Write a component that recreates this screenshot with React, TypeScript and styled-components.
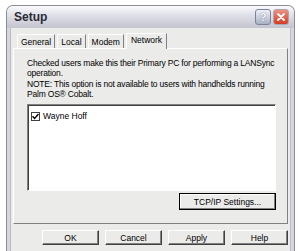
import styled, { createGlobalStyle } from "styled-components";

const GlobalStyle = createGlobalStyle`
  html, body {
    margin: 0;
    padding: 0;
    background: #ffffff;
  }
  body {
    font-family: "Liberation Sans", Arial, sans-serif;
    overflow: hidden;
  }
`;

const tabs = ["General", "Local", "Modem", "Network"];
const buttons = ["OK", "Cancel", "Apply", "Help"];

function App() {
  return (
    <>
      <GlobalStyle />
      <Window>
        <TitleBar>
          <Title>Setup</Title>
          <Controls>
            <HelpBox>?</HelpBox>
            <CloseBox>
              <svg width="10" height="10" viewBox="0 0 10 10">
                <path
                  d="M2 2 L8 8 M8 2 L2 8"
                  stroke="#ffffff"
                  strokeWidth="1.8"
                  strokeLinecap="round"
                />
              </svg>
            </CloseBox>
          </Controls>
        </TitleBar>
        <Client>
          <TabRow>
            {tabs.map((t) => (
              <Tab key={t} $active={t === "Network"}>
                {t}
              </Tab>
            ))}
          </TabRow>
          <Panel>
            <Description>
              Checked users make this their Primary PC for performing a LANSync
              operation.
              <br />
              NOTE: This option is not available to users with handhelds running
              Palm OS® Cobalt.
            </Description>
            <ListBox>
              <ListItem>
                <CheckBox>
                  <svg width="7" height="7" viewBox="0 0 7 7">
                    <path
                      d="M0.5 3.2 L2.6 5.4 L6.5 1"
                      stroke="#000"
                      strokeWidth="1.5"
                      fill="none"
                    />
                  </svg>
                </CheckBox>
                Wayne Hoff
              </ListItem>
            </ListBox>
            <PanelFooter>
              <TcpButton>TCP/IP Settings...</TcpButton>
            </PanelFooter>
          </Panel>
          <ButtonRow>
            {buttons.map((b) => (
              <DialogButton key={b}>{b}</DialogButton>
            ))}
          </ButtonRow>
        </Client>
      </Window>
    </>
  );
}

const Window = styled.div`
  width: 287px;
  height: 246px;
  margin: 5px 0 0 6px;
  border: 1px solid #8c8c9a;
  border-bottom: none;
  border-radius: 7px 7px 0 0;
  background: #d6d6de;
  display: flex;
  flex-direction: column;
  overflow: hidden;
`;

const TitleBar = styled.div`
  height: 22px;
  flex-shrink: 0;
  display: flex;
  align-items: center;
  justify-content: space-between;
  padding: 0 5px 0 7px;
  background: linear-gradient(
    to bottom,
    #fcfcfd 0%,
    #e6e6ee 30%,
    #d2d2dc 70%,
    #c4c4d0 100%
  );
`;

const Title = styled.div`
  font-size: 12px;
  font-weight: bold;
  color: #2a2a34;
`;

const Controls = styled.div`
  display: flex;
  gap: 2px;
`;

const CaptionButton = styled.div`
  width: 16px;
  height: 16px;
  border-radius: 3px;
  display: flex;
  align-items: center;
  justify-content: center;
  box-sizing: border-box;
`;

const HelpBox = styled(CaptionButton)`
  background: linear-gradient(to bottom, #eef0f6, #a8b0c4);
  border: 1px solid #7c8498;
  color: #ffffff;
  font-size: 11px;
  font-weight: bold;
  text-shadow: 0 0 1px #4a5470;
`;

const CloseBox = styled(CaptionButton)`
  background: linear-gradient(to bottom, #f09080, #d43c24);
  border: 1px solid #a8a8b4;
`;

const Client = styled.div`
  flex: 1;
  margin: 0 3px;
  background: #ebebea;
  border-left: 1px solid #bcbcc6;
  border-right: 1px solid #bcbcc6;
  padding: 5px 2px 0 2px;
  display: flex;
  flex-direction: column;
`;

const TabRow = styled.div`
  display: flex;
  align-items: flex-end;
  padding-left: 4px;
  height: 15px;
`;

const Tab = styled.div<{ $active?: boolean }>`
  font-size: 8.5px;
  color: #000;
  padding: 0 ${(p) => (p.$active ? "4px" : "3px")};
  height: ${(p) => (p.$active ? "16px" : "14px")};
  line-height: ${(p) => (p.$active ? "13px" : "14px")};
  box-sizing: border-box;
  border-top: 1px solid #ffffff;
  border-left: 1px solid #ffffff;
  border-right: 1px solid #808080;
  margin-right: ${(p) => (p.$active ? "0" : "2px")};
  margin-bottom: ${(p) => (p.$active ? "-1px" : "0")};
  background: #ebebea;
  position: relative;
  z-index: ${(p) => (p.$active ? 1 : 0)};
`;

const Panel = styled.div`
  width: 275px;
  height: 176px;
  box-sizing: border-box;
  border-top: 1px solid #ffffff;
  border-left: 1px solid #ffffff;
  border-right: 1px solid #808080;
  border-bottom: 1px solid #808080;
  padding: 9px 11px 0 13px;
  display: flex;
  flex-direction: column;
`;

const Description = styled.div`
  font-size: 8.5px;
  letter-spacing: -0.2px;
  line-height: 10.3px;
  color: #000;
`;

const ListBox = styled.div`
  margin-top: 5px;
  height: 87px;
  box-sizing: border-box;
  background: #ffffff;
  border-top: 1px solid #808080;
  border-left: 1px solid #808080;
  border-right: 1px solid #ffffff;
  border-bottom: 1px solid #ffffff;
  box-shadow: inset 1px 1px 0 #404040;
  padding: 6px 3px;
`;

const ListItem = styled.div`
  display: flex;
  align-items: center;
  gap: 3px;
  font-size: 8.5px;
  color: #000;
`;

const CheckBox = styled.div`
  width: 9px;
  height: 9px;
  box-sizing: border-box;
  border: 1px solid #404040;
  background: #fff;
  display: flex;
  align-items: center;
  justify-content: center;
`;

const PanelFooter = styled.div`
  display: flex;
  justify-content: flex-end;
  margin-top: 2px;
`;

const TcpButton = styled.div`
  width: 97px;
  height: 17px;
  box-sizing: border-box;
  border: 1px solid #000;
  box-shadow: inset -1px -1px 0 #808080, inset 1px 1px 0 #ffffff;
  background: #ebebea;
  font-size: 8.5px;
  display: flex;
  align-items: center;
  justify-content: center;
  color: #000;
`;

const ButtonRow = styled.div`
  display: flex;
  justify-content: flex-end;
  gap: 6px;
  margin-top: 6px;
`;

const DialogButton = styled.div`
  width: 57px;
  height: 15px;
  box-sizing: border-box;
  border-top: 1px solid #ffffff;
  border-left: 1px solid #ffffff;
  border-right: 1px solid #404040;
  border-bottom: 1px solid #404040;
  box-shadow: inset -1px -1px 0 #808080;
  background: #ebebea;
  font-size: 8.5px;
  color: #000;
  display: flex;
  align-items: center;
  justify-content: center;
`;

export default App;
